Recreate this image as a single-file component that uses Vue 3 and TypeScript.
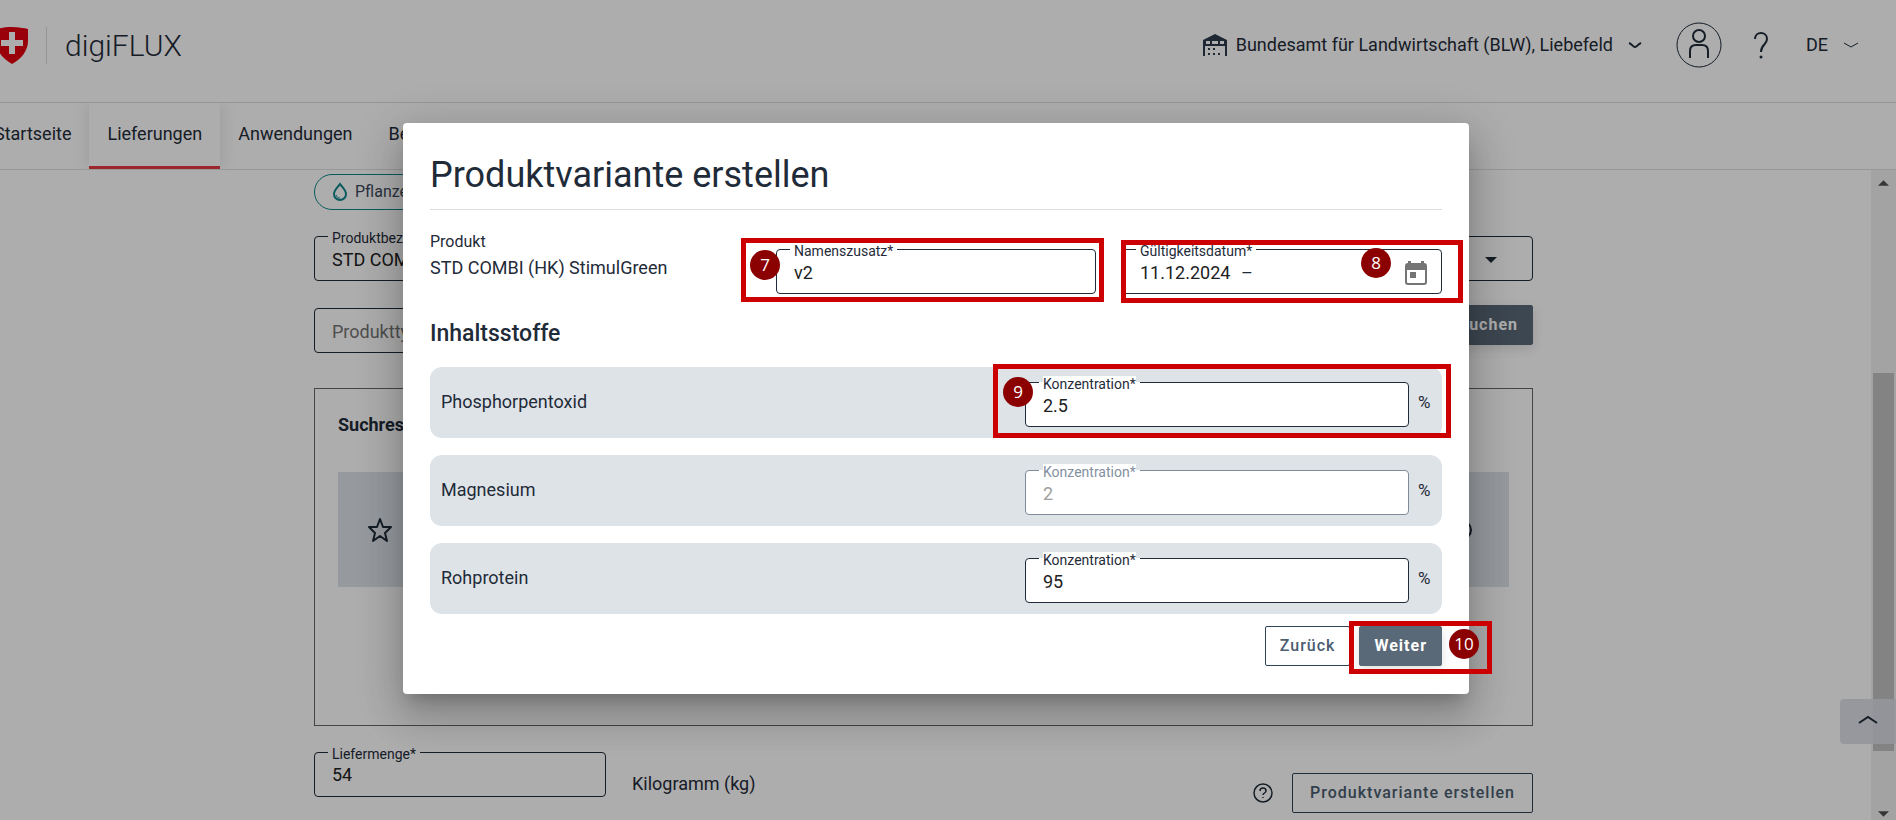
<script setup lang="ts">
import { ref } from 'vue'

interface Ingredient {
  id: string
  name: string
  value: string
  disabled: boolean
}

interface Hint {
  step: string
  kind: string
}

const navItems: string[] = ['Startseite', 'Lieferungen', 'Anwendungen', 'Betriebe']
const activeItem = 'Lieferungen'

const product = ref('STD COMBI (HK) StimulGreen')
const productType = ref('')
const amount = ref('54')
const suffix = ref('v2')
const validFrom = ref('11.12.2024')
const validTo = ref('')

const ingredients = ref<Ingredient[]>([
  { id: 'p', name: 'Phosphorpentoxid', value: '2.5', disabled: false },
  { id: 'mg', name: 'Magnesium', value: '2', disabled: true },
  { id: 'rp', name: 'Rohprotein', value: '95', disabled: false },
])

const hints: Hint[] = [
  { step: '7', kind: 'name' },
  { step: '8', kind: 'date' },
  { step: '9', kind: 'conc' },
  { step: '10', kind: 'next' },
]
</script>

<template>
  <div class="shell">
    <header class="header">
      <svg class="shield" viewBox="0 0 32 37" aria-hidden="true">
        <path fill="#e3000f" d="M16 0C10 0 4 1 0 2v12c0 10 7 18 16 23 9-5 16-13 16-23V2C28 1 22 0 16 0z" />
        <path fill="#fff" d="M13 5h6v8h8v6h-8v8h-6v-8H5v-6h8z" />
      </svg>
      <span class="brand">digiFLUX</span>
      <div class="tools">
        <button class="tool org" type="button">
          <svg class="barn" viewBox="0 0 24 22" aria-hidden="true">
            <path fill="#2b3b4d" fill-rule="evenodd" d="M12 0 24 6v16h-2V12H2v10H0V6zM3 7v3h4V7zm6 0v3h6V7zm8 0v3h4V7z" />
            <path fill="#2b3b4d" d="M5 14h2v2H5zM10 14h2v2h-2zM5 19h2v2H5zM10 19h2v2h-2zM15 19h2v2h-2z" />
          </svg>
          <span>Bundesamt für Landwirtschaft (BLW), Liebefeld</span>
          <svg class="chev" viewBox="0 0 14 8" aria-hidden="true"><path d="M1 2c3 1 4 4 6 4s3-3 6-4" /></svg>
        </button>
        <button class="tool user" type="button" aria-label="Benutzerkonto">
          <svg viewBox="0 0 46 46" aria-hidden="true">
            <circle cx="23" cy="23" r="22" stroke-width="1" />
            <circle cx="23" cy="14" r="6" stroke-width="2" />
            <path stroke-width="2" d="M14 36v-7q0-6 6-6h6q6 0 6 6v7" />
          </svg>
        </button>
        <button class="tool help" type="button" aria-label="Hilfe">
          <svg viewBox="0 0 16 27" aria-hidden="true">
            <path stroke-width="2" d="M2 7c0-8 12-8 12 0 0 6-6 5-6 13" />
            <circle class="dot" cx="8" cy="25" r="1.5" />
          </svg>
        </button>
        <button class="tool lang" type="button">
          <span>DE</span>
          <svg class="chev" viewBox="0 0 14 8" aria-hidden="true"><path d="M0 2l7 4 7-4" /></svg>
        </button>
      </div>
    </header>

    <nav class="nav">
      <a v-for="item in navItems" :key="item" href="#" class="tab" :class="{ active: item === activeItem }">{{ item }}</a>
    </nav>

    <div class="body">
      <main class="main">
        <div class="column">
          <div class="chip">
            <svg viewBox="0 0 16 20" aria-hidden="true">
              <path stroke-width="2" d="M8 2C6 5 2 8 2 12a6 6 0 0 0 12 0c0-4-4-7-6-10z" />
              <path stroke-width="1" d="M4 13c1 2 2 3 4 3" />
            </svg>
            <span>Pflanzennährstoffe</span>
          </div>

          <div class="row pair">
            <div class="field">
              <label for="product"><span>Produktbezeichnung</span></label>
              <input id="product" v-model="product" type="text" />
            </div>
            <div class="field">
              <select aria-label="Hersteller"><option></option></select>
              <svg class="caret" viewBox="0 0 12 6" aria-hidden="true"><path d="M0 0h12L6 6z" /></svg>
            </div>
          </div>

          <div class="row search">
            <div class="field narrow">
              <input v-model="productType" type="text" placeholder="Produkttyp" aria-label="Produkttyp" />
            </div>
            <button class="btn filled" type="button">Suchen</button>
          </div>

          <section class="panel">
            <h2>Suchresultate</h2>
            <div class="result">
              <svg class="star" viewBox="0 0 26 26" aria-hidden="true">
                <path d="M13 2l3 8h8l-6 6 2 8-7-5-7 5 2-8-6-6h8z" />
              </svg>
              <svg class="radio" viewBox="0 0 20 20" aria-hidden="true"><circle cx="10" cy="10" r="9" /></svg>
            </div>
          </section>

          <div class="row bottom">
            <div class="field amount">
              <label for="amount"><span>Liefermenge*</span></label>
              <input id="amount" v-model="amount" type="text" />
            </div>
            <span class="unit">Kilogramm (kg)</span>
            <svg class="info" viewBox="0 0 20 20" aria-hidden="true">
              <circle cx="10" cy="10" r="9" />
              <path d="M7 8c0-4 6-4 6 0 0 2-3 2-3 4" />
              <path d="M10 14v1" />
            </svg>
            <button class="btn outline" type="button">Produktvariante erstellen</button>
          </div>
        </div>
      </main>
      <div class="scrollbar" aria-hidden="true">
        <svg viewBox="0 0 12 6"><path d="M0 6h12L6 0z" /></svg>
        <div class="track"><div class="thumb"></div></div>
        <svg viewBox="0 0 12 6"><path d="M0 0h12L6 6z" /></svg>
      </div>
      <button class="to-top" type="button" aria-label="Nach oben">
        <svg viewBox="0 0 20 10" aria-hidden="true"><path d="M1 8l9-6 9 6" /></svg>
      </button>
    </div>

    <div class="backdrop">
      <div class="dialog" role="dialog" aria-labelledby="dialog-title">
        <h1 id="dialog-title">Produktvariante erstellen</h1>
        <div class="grid">
          <div class="product">
            <span class="caption">Produkt</span>
            <span>STD COMBI (HK) StimulGreen</span>
          </div>
          <div class="field">
            <label for="suffix"><span>Namenszusatz*</span></label>
            <input id="suffix" v-model="suffix" type="text" />
          </div>
          <div class="field date">
            <label for="from"><span>Gültigkeitsdatum*</span></label>
            <input id="from" v-model="validFrom" class="from" type="text" />
            <span>–</span>
            <input v-model="validTo" type="text" aria-label="Gültig bis" />
            <button class="cal" type="button" aria-label="Kalender öffnen">
              <svg viewBox="0 0 22 24" aria-hidden="true">
                <path fill-rule="evenodd" d="M3 0h3v2h10V0h3v2q3 0 3 3v16q0 3-3 3H3q-3 0-3-3V5q0-3 3-3zM2 9v12q0 1 1 1h16q1 0 1-1V9z" />
                <path d="M5 11h6v6H5z" />
              </svg>
            </button>
          </div>
        </div>
        <h2>Inhaltsstoffe</h2>
        <div class="list">
          <div v-for="item in ingredients" :key="item.id" class="ingredient">
            <span class="name">{{ item.name }}</span>
            <div class="field conc" :class="{ disabled: item.disabled }">
              <label :for="'conc-' + item.id"><span>Konzentration*</span></label>
              <input :id="'conc-' + item.id" v-model="item.value" type="text" :disabled="item.disabled" />
            </div>
            <span class="percent">%</span>
          </div>
        </div>
        <div class="actions">
          <button class="btn outline" type="button">Zurück</button>
          <button class="btn filled" type="button">Weiter</button>
        </div>
        <div v-for="hint in hints" :key="hint.step" class="hint" :class="'hint-' + hint.kind">
          <span class="badge">{{ hint.step }}</span>
        </div>
      </div>
    </div>
  </div>
</template>

<style>
html,
body {
  overflow: hidden;
  background: #fff;
}
</style>

<style scoped>
.shell,
.shell * {
  box-sizing: border-box;
}
.shell {
  position: relative;
  display: flex;
  flex-direction: column;
  height: 100vh;
  margin-left: -24px;
  overflow: hidden;
  background: #fff;
  color: #1f2b38;
  font-family: Roboto, "Liberation Sans", sans-serif;
  font-size: 18px;
  line-height: 24px;
}
button,
input,
select {
  font: inherit;
  color: inherit;
}
button {
  cursor: pointer;
}
svg {
  display: block;
  flex: none;
}
h1,
h2 {
  margin: 0;
}

.header {
  display: flex;
  align-items: center;
  flex: none;
  height: 103px;
  padding: 0 38px 12px 20px;
  border-bottom: 1px solid #dcdce0;
}
.shield {
  width: 32px;
  height: 37px;
}
.brand {
  margin-left: 18px;
  padding-left: 18px;
  border-left: 1px solid #dcdce0;
  font-size: 30px;
  font-weight: 300;
  line-height: 37px;
}
.tools {
  display: flex;
  align-items: center;
  margin-left: auto;
}
.tool {
  display: flex;
  align-items: center;
  padding: 0;
  border: 0;
  background: none;
}
.tool svg {
  fill: none;
  stroke: #1f2b38;
}
.tool .dot {
  fill: #1f2b38;
  stroke: none;
}
.org {
  gap: 9px;
}
.tool .barn {
  width: 24px;
  height: 22px;
  stroke: none;
}
.chev {
  width: 14px;
  height: 8px;
  stroke-width: 2;
}
.org .chev {
  margin-left: 6px;
}
.user {
  margin-left: 34px;
}
.user svg {
  width: 46px;
  height: 46px;
}
.help {
  margin-left: 31px;
}
.help svg {
  width: 16px;
  height: 27px;
}
.lang {
  gap: 16px;
  margin-left: 37px;
}
.lang .chev {
  stroke-width: 1;
}

.nav {
  display: flex;
  flex: none;
  height: 67px;
  overflow: hidden;
  border-bottom: 1px solid #e1e1e1;
}
.tab {
  padding: 19px 18px 0;
  border-bottom: 3px solid transparent;
  color: inherit;
  text-decoration: none;
}
.tab.active {
  border-bottom-color: #e53940;
  box-shadow: 0 0 16px rgba(0, 0, 0, 0.12);
}

.body {
  position: relative;
  display: flex;
  flex: 1;
  min-height: 0;
}
.main {
  flex: 1;
  overflow: hidden;
  padding: 4px 24px 0;
}
.column {
  max-width: 1219px;
  margin: 0 auto;
}
.chip {
  display: inline-flex;
  align-items: center;
  gap: 7px;
  height: 36px;
  padding: 0 17px;
  border: 1px solid #0f868b;
  border-radius: 18px;
  color: #3d4b5c;
  font-size: 16px;
  vertical-align: top;
}
.chip svg {
  width: 16px;
  height: 20px;
  fill: none;
  stroke: #0f868b;
}
.row {
  display: flex;
}
.pair {
  gap: 24px;
  margin-top: 26px;
}
.pair .field {
  flex: 1;
}
.search {
  justify-content: space-between;
  margin-top: 24px;
}
.search .field {
  margin-top: 3px;
}
.narrow {
  width: 600px;
}

.field {
  position: relative;
  display: flex;
  align-items: center;
  height: 45px;
  padding: 2px 17px 0;
  border: 1px solid #1f2b38;
  border-radius: 4px;
  background: #fff;
}
.field label {
  position: absolute;
  top: -7px;
  left: 13px;
  padding: 0 4px;
  background: linear-gradient(#fff, #fff) 0 6px / 100% 1px no-repeat;
  font-size: 14px;
  line-height: 16px;
}
.field label span {
  display: block;
  background: #fff;
}
.field input,
.field select {
  flex: 1;
  min-width: 0;
  width: 100%;
  height: 24px;
  padding: 0;
  border: 0;
  outline: 0;
  background: none;
  color: #212121;
  appearance: none;
}
.field input::placeholder {
  color: #757575;
}
.caret {
  width: 12px;
  height: 6px;
  margin-right: 18px;
  fill: #1f2b38;
}

.btn {
  height: 40px;
  padding: 0 14px;
  border: 1px solid #2f4356;
  border-radius: 2px;
  background: #fff;
  color: #4b5d70;
  font-size: 16px;
  font-weight: 500;
  letter-spacing: 1px;
}
.btn.filled {
  border-color: #5a6978;
  background: #5a6978;
  color: #fff;
  font-weight: 700;
  box-shadow: 0 4px 12px rgba(0, 0, 0, 0.12);
}

.panel {
  height: 338px;
  margin-top: 35px;
  padding: 24px 23px;
  border: 1px solid #666;
}
.panel h2 {
  font-size: 18px;
  line-height: 24px;
}
.result {
  display: flex;
  align-items: center;
  justify-content: space-between;
  height: 115px;
  margin-top: 35px;
  padding: 0 37px 0 29px;
  background: #dde4ea;
}
.star {
  width: 26px;
  height: 26px;
  fill: none;
  stroke: #1f2b38;
  stroke-width: 2;
  stroke-linejoin: round;
}
.radio {
  width: 20px;
  height: 20px;
  fill: none;
  stroke: #1f2b38;
  stroke-width: 2;
}
.bottom {
  align-items: flex-start;
  margin-top: 26px;
}
.bottom .amount {
  width: 292px;
  padding-top: 0;
}
.unit {
  margin: 20px auto 0 26px;
}
.info {
  width: 20px;
  height: 20px;
  margin: 31px 19px 0 0;
  fill: none;
  stroke: #1f2b38;
  stroke-width: 1.5;
}
.bottom .btn {
  margin-top: 21px;
  padding: 0 17px;
}

.scrollbar {
  display: flex;
  flex-direction: column;
  align-items: center;
  width: 25px;
  padding: 10px 0 3px;
  background: #f1f1f1;
}
.scrollbar svg {
  width: 11px;
  height: 6px;
  fill: #505050;
}
.track {
  display: flex;
  flex: 1;
  flex-direction: column;
  width: 21px;
  padding: 187px 0 60px;
}
.thumb {
  flex: 1;
  background: #c1c1c1;
}
.to-top {
  position: absolute;
  right: 0;
  bottom: 76px;
  display: flex;
  align-items: center;
  width: 56px;
  height: 45px;
  padding: 0 0 4px 18px;
  border: 0;
  border-radius: 4px 0 0 4px;
  background: rgba(220, 222, 230, 0.9);
}
.to-top svg {
  width: 20px;
  height: 10px;
  fill: none;
  stroke: #1f2b38;
  stroke-width: 2;
}

.backdrop {
  position: absolute;
  inset: 0;
  display: flex;
  align-items: center;
  justify-content: center;
  padding-bottom: 3px;
  background: rgba(0, 0, 0, 0.32);
}
.dialog {
  position: relative;
  width: 1066px;
  max-width: 90%;
  padding: 28px 27px;
  border-radius: 4px;
  background: #fff;
  box-shadow:
    0 11px 15px -7px rgba(0, 0, 0, 0.2),
    0 24px 38px 3px rgba(0, 0, 0, 0.14),
    0 9px 46px 8px rgba(0, 0, 0, 0.12);
}
.dialog h1 {
  padding-bottom: 10px;
  border-bottom: 1px solid #dcdce0;
  font-size: 36px;
  font-weight: 400;
  line-height: 48px;
}
.grid {
  display: grid;
  grid-template-columns: repeat(3, 1fr);
  gap: 26px;
  padding-top: 20px;
}
.product {
  display: flex;
  flex-direction: column;
  gap: 2px;
}
.product .caption {
  font-size: 16px;
}
.grid .field {
  margin-top: 19px;
}
.grid .date {
  padding-right: 14px;
}
.date input.from {
  flex: none;
  width: 101px;
}
.cal {
  padding: 0;
  border: 0;
  background: none;
}
.cal svg {
  width: 22px;
  height: 24px;
  fill: #757575;
}
.dialog h2 {
  margin-top: 24px;
  font-size: 23px;
  font-weight: 500;
  line-height: 32px;
}
.list {
  display: flex;
  flex-direction: column;
  gap: 17px;
  margin-top: 17px;
}
.ingredient {
  display: flex;
  align-items: center;
  height: 71px;
  padding: 0 12px 0 11px;
  border-radius: 12px;
  background: #dee3e8;
}
.name {
  flex: 1;
  padding-bottom: 2px;
}
.conc {
  width: 384px;
  margin-top: 4px;
}
.conc.disabled {
  border-color: #7f8b98;
  color: #8390a0;
}
.conc.disabled input {
  color: #9e9e9e;
}
.percent {
  width: 21px;
  padding: 0 0 2px 9px;
  font-size: 17px;
}
.actions {
  display: flex;
  justify-content: flex-end;
  gap: 9px;
  margin-top: 12px;
}

.hint {
  position: absolute;
  border: 5px solid #c00;
  pointer-events: none;
}
.hint-name {
  top: 115px;
  left: 338px;
  width: 363px;
  height: 64px;
}
.hint-date {
  top: 117px;
  left: 718px;
  width: 342px;
  height: 63px;
}
.hint-conc {
  top: 241px;
  left: 590px;
  width: 458px;
  height: 74px;
}
.hint-next {
  top: 498px;
  left: 946px;
  width: 143px;
  height: 53px;
}
.badge {
  position: absolute;
  top: 7px;
  left: 4px;
  width: 30px;
  height: 30px;
  border-radius: 50%;
  background: #8b0000;
  color: #fff;
  font-family: "Open Sans", sans-serif;
  font-size: 17px;
  line-height: 30px;
  text-align: center;
}
.hint-date .badge {
  top: 3px;
  left: 235px;
}
.hint-conc .badge {
  top: 8px;
  left: 5px;
}
.hint-next .badge {
  top: 3px;
  left: 95px;
}
</style>
